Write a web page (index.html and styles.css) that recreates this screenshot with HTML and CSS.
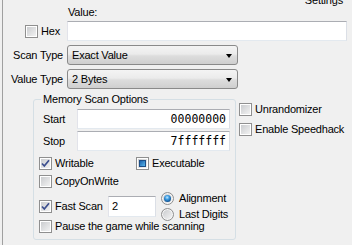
FILE: index.html
```html
<!DOCTYPE html>
<html lang="en">
<head>
    <meta charset="UTF-8">
    <meta name="viewport" content="width=device-width, initial-scale=1.0">
    <title>Scan Options</title>
    <link rel="stylesheet" href="styles.css">
</head>
<body>
    <div class="panel">
        <div class="header">
            <span class="value-label">Value:</span>
            <span class="settings">Settings</span>
        </div>

        <div class="row">
            <label class="label hex"><span class="check"></span>Hex</label>
            <div class="textbox value-box"></div>
        </div>
        <div class="row">
            <span class="label">Scan Type</span>
            <div class="combo">Exact Value<span class="arrow"></span></div>
        </div>
        <div class="row">
            <span class="label">Value Type</span>
            <div class="combo">2 Bytes<span class="arrow"></span></div>
        </div>

        <div class="scan-area">
            <fieldset class="group">
                <legend>Memory Scan Options</legend>
                <div class="range-row">
                    <span class="range-label">Start</span>
                    <div class="textbox hexnum">00000000</div>
                </div>
                <div class="range-row">
                    <span class="range-label">Stop</span>
                    <div class="textbox hexnum">7fffffff</div>
                </div>

                <div class="opt-row first">
                    <label class="option wide">
                        <span class="check"><svg width="11" height="11" viewBox="0 0 11 11"><path d="M2 5.5 L4.3 8 L9 2.2" fill="none" stroke="#3b4e8e" stroke-width="1.7"/></svg></span>Writable
                    </label>
                    <label class="option"><span class="check mixed"></span>Executable</label>
                </div>
                <div class="opt-row">
                    <label class="option"><span class="check"></span>CopyOnWrite</label>
                </div>
                <div class="fast-row">
                    <label class="option fast">
                        <span class="check"><svg width="11" height="11" viewBox="0 0 11 11"><path d="M2 5.5 L4.3 8 L9 2.2" fill="none" stroke="#3b4e8e" stroke-width="1.7"/></svg></span>Fast Scan
                    </label>
                    <div class="textbox small-box">2</div>
                    <div class="radios">
                        <label class="option radio-row"><span class="radio on"></span>Alignment</label>
                        <label class="option radio-row"><span class="radio"></span>Last Digits</label>
                    </div>
                </div>
                <div class="opt-row pause">
                    <label class="option"><span class="check"></span>Pause the game while scanning</label>
                </div>
            </fieldset>

            <div class="side">
                <label class="option side-item"><span class="check"></span>Unrandomizer</label>
                <label class="option side-item"><span class="check"></span>Enable Speedhack</label>
            </div>
        </div>
    </div>
</body>
</html>
```

FILE: styles.css
```css
body {
    margin: 0;
    background-color: #f0f0f0;
    font-family: "Liberation Sans", Arial, sans-serif;
    font-size: 11px;
    letter-spacing: -0.2px;
    color: #000;
    overflow: hidden;
}
.panel {
    margin-left: 2px;
    border-left: 1px solid #a0a0a0;
    height: 245px;
    box-sizing: border-box;
}
.header {
    display: flex;
    justify-content: space-between;
    align-items: flex-start;
    height: 21px;
    padding: 0 9px 0 65px;
    line-height: 13px;
}
.value-label {
    margin-top: 6px;
}
.settings {
    margin-top: -6px;
}
.row {
    display: flex;
    align-items: center;
    gap: 4px;
    height: 20px;
    margin-bottom: 4px;
}
.label {
    width: 60px;
    flex: none;
    text-align: right;
    line-height: 13px;
}
.hex {
    display: flex;
    justify-content: flex-end;
    align-items: center;
    gap: 3px;
    padding-right: 3px;
    box-sizing: border-box;
}
.textbox {
    box-sizing: border-box;
    height: 20px;
    background-color: #fff;
    border: 1px solid;
    border-color: #abadb3 #dbdfe6 #e3e9ef #e2e3ea;
}
.value-box {
    width: 280px;
}
.combo {
    box-sizing: border-box;
    width: 171px;
    height: 20px;
    border: 1px solid #8a8a8a;
    border-radius: 3px;
    background: linear-gradient(#f4f4f4, #ebebeb 45%, #dddddd 55%, #cfcfcf);
    display: flex;
    align-items: center;
    justify-content: space-between;
    padding: 0 5px 0 4px;
    line-height: 13px;
}
.arrow {
    width: 0;
    height: 0;
    margin-top: 1px;
    border-left: 3.5px solid transparent;
    border-right: 3.5px solid transparent;
    border-top: 4px solid #000;
}
.scan-area {
    display: flex;
    align-items: flex-start;
}
.group {
    margin: 0 0 0 30px;
    width: 203px;
    height: 147px;
    min-width: 0;
    box-sizing: border-box;
    border: 1px solid #d5dfe5;
    border-radius: 3px;
    padding: 3px 5px;
}
.group legend {
    padding: 0 2px;
    margin-left: 2px;
    line-height: 13px;
}
.range-row {
    display: flex;
    align-items: center;
    height: 20px;
    margin-bottom: 2px;
}
.range-label {
    width: 38px;
    padding-left: 4px;
    box-sizing: border-box;
    line-height: 13px;
}
.hexnum {
    width: 153px;
    padding-right: 3px;
    text-align: right;
    font-family: "DejaVu Sans Mono", monospace;
    font-size: 11.5px;
    letter-spacing: 0;
    line-height: 18px;
}
.opt-row {
    display: flex;
    align-items: center;
    height: 18px;
}
.opt-row.first {
    margin-top: 3px;
}
.option {
    display: flex;
    align-items: center;
    gap: 3px;
    line-height: 13px;
    white-space: nowrap;
}
.wide {
    width: 97px;
}
.fast-row {
    display: flex;
    align-items: center;
    height: 32px;
}
.fast {
    width: 69px;
}
.small-box {
    width: 48px;
    height: 21px;
    padding-left: 3px;
    line-height: 19px;
}
.radios {
    margin-left: 5px;
}
.radio-row {
    height: 16px;
    gap: 5px;
}
.pause {
    height: 13px;
    margin-top: -2px;
}
.side {
    margin-left: 3px;
    padding-top: 6px;
}
.side-item {
    height: 20px;
}
.check {
    width: 13px;
    height: 13px;
    flex: none;
    box-sizing: border-box;
    border: 1px solid #8f8f8f;
    background: linear-gradient(135deg, #c6c8cb, #f6f6f6);
    box-shadow: inset 0 0 0 1px #fff;
    display: flex;
    align-items: center;
    justify-content: center;
}
.check svg {
    display: block;
}
.check.mixed::after {
    content: "";
    width: 7px;
    height: 7px;
    box-sizing: border-box;
    border: 1px solid #1d4e86;
    background: linear-gradient(135deg, #1a62ad, #5ab6ea);
}
.radio {
    position: relative;
    width: 13px;
    height: 13px;
    flex: none;
    box-sizing: border-box;
    border: 1px solid #8f8f8f;
    border-radius: 50%;
    background: linear-gradient(135deg, #c6c8cb, #f7f7f7);
    box-shadow: inset 0 0 0 1px #f6f6f6;
}
.radio.on::after {
    content: "";
    position: absolute;
    left: 2px;
    top: 2px;
    width: 7px;
    height: 7px;
    border-radius: 50%;
    background: radial-gradient(circle at 45% 35%, #bfe8ff 0, #3b9ae0 35%, #0d4f8f 75%, #0a3766 100%);
}
```
